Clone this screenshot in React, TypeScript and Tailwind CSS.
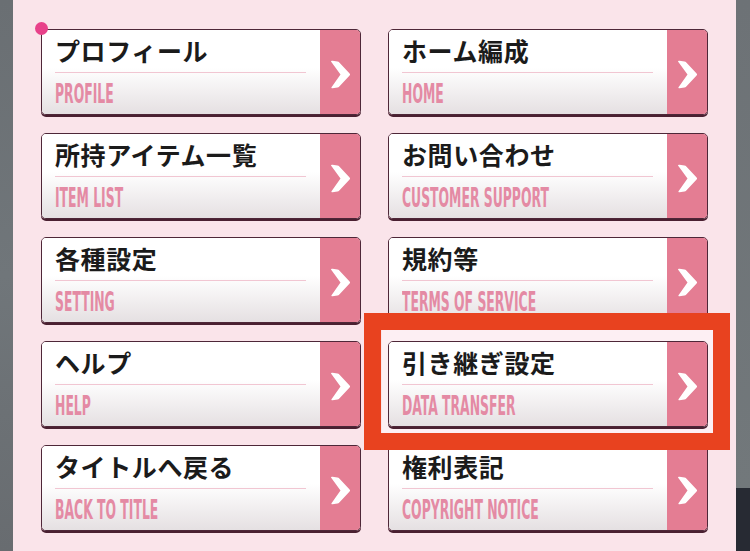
import React from "react";

type Item = { ja: string; en: string };

const items: Item[] = [
  { ja: "プロフィール", en: "PROFILE" },
  { ja: "ホーム編成", en: "HOME" },
  { ja: "所持アイテム一覧", en: "ITEM LIST" },
  { ja: "お問い合わせ", en: "CUSTOMER SUPPORT" },
  { ja: "各種設定", en: "SETTING" },
  { ja: "規約等", en: "TERMS OF SERVICE" },
  { ja: "ヘルプ", en: "HELP" },
  { ja: "引き継ぎ設定", en: "DATA TRANSFER" },
  { ja: "タイトルへ戻る", en: "BACK TO TITLE" },
  { ja: "権利表記", en: "COPYRIGHT NOTICE" },
];

const Chevron = () => (
  <svg width="21" height="29" viewBox="0 0 21 29" className="mt-[4px]">
    <path
      d="M1 1.5 Q1 0.5 2.5 0.8 L7.5 1.5 Q8.5 1.7 9.3 2.6 L19.6 13.4 Q20.6 14.5 19.6 15.6 L9.3 26.4 Q8.5 27.3 7.5 27.5 L2.5 28.2 Q1 28.5 1.5 27.3 L10.5 14.5 Z"
      fill="#ffffff"
    />
  </svg>
);

const MenuButton = ({ item }: { item: Item }) => (
  <div className="relative z-10 flex h-[86px] w-[320px] overflow-hidden rounded-[5px] border-[1.5px] border-[#4e2738] shadow-[0_2px_0_#4a2031]">
    <div className="flex min-w-0 flex-1 flex-col bg-gradient-to-b from-white from-45% to-[#e5e0e2] pl-[13px] pr-[14px] pt-[5px]">
      <div
        className="h-[30px] text-[25px] font-bold leading-[30px] tracking-[0.6px] text-[#1b1b1b]"
        style={{ fontFamily: '"Noto Sans CJK JP", "Noto Sans", sans-serif' }}
      >
        {item.ja}
      </div>
      <div className="mt-[7px] h-px w-full bg-[#f1c6d2]" />
      <div
        className="mt-[9px] h-[24px] origin-left scale-x-[0.53] whitespace-nowrap text-[26px] font-bold leading-[24px] text-[#e48aa4]"
        style={{ fontFamily: '"Liberation Sans Narrow", "DejaVu Sans Condensed", "Liberation Sans", sans-serif' }}
      >
        {item.en}
      </div>
    </div>
    <div className="flex w-[40px] shrink-0 items-center justify-center bg-[#e47d93]">
      <Chevron />
    </div>
  </div>
);

export default function App() {
  return (
    <div className="flex h-[551px] w-[750px] overflow-hidden">
      <div className="w-[13px] bg-gradient-to-b from-[#6a6f73] via-[#70767a] to-[#686c70]" />
      <div className="relative flex-1 bg-[#fae4ea] pl-[28px] pt-[29px]">
        <div className="grid grid-cols-[320px_320px] gap-x-[27px] gap-y-[18px]">
          {items.map((it) => (
            <MenuButton key={it.en} item={it} />
          ))}
        </div>
        {/* highlight behind the data transfer button */}
        <div className="absolute left-[369px] top-[330px] z-0 h-[108px] w-[333px] bg-[#fdeff3]" />
        {/* red annotation frame */}
        <div className="absolute left-[351px] top-[313px] z-20 h-[137px] w-[366px] border-[17px] border-[#e8421f]" />
        {/* pink dot */}
        <div className="absolute left-[22px] top-[22px] z-20 h-[13px] w-[13px] rounded-full bg-[#e8418a]" />
      </div>
      <div className="flex w-[14px] flex-col">
        <div className="h-[488px] bg-gradient-to-b from-[#6d7276] to-[#72787b]" />
        <div className="flex-1 bg-[#272a33]" />
      </div>
    </div>
  );
}
